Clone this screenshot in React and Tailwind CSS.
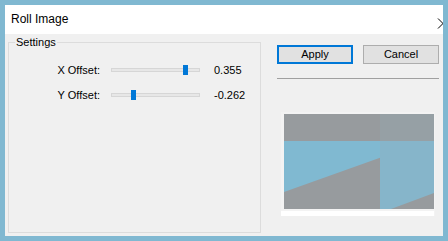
import React from "react";

function Slider({ pos }) {
  return (
    <div className="relative ml-[11px] h-[4px] w-[89px] border border-[#d6d6d6] bg-[#e7e7e7]">
      <div
        className="absolute top-[-4px] h-[10px] w-[5px] bg-[#0078d7]"
        style={{ left: pos - 1 }}
      />
    </div>
  );
}

function Row({ label, pos, value }) {
  return (
    <div className="flex h-[20px] items-center">
      <div className="w-[91px] text-right">{label}</div>
      <Slider pos={pos} />
      <div className="ml-[14px]">{value}</div>
    </div>
  );
}

export default function App() {
  return (
    <div className="h-[241px] w-[448px] bg-[#80b8d1] p-[5px] font-['Liberation_Sans',Arial,sans-serif] text-[11px] text-black">
      <div className="relative flex h-[231px] w-[438px] flex-col overflow-hidden bg-[#f0f0f0]">
        <div className="relative flex h-[29px] shrink-0 items-center bg-white pb-[2px] pl-[6px] text-[12px]">
          Roll Image
          <svg
            className="absolute left-[432px] top-[13px]"
            width="12"
            height="11"
            viewBox="0 0 12 11"
          >
            <path d="M1 0.5 L6 5.5 L1 10.5 M11 0.5 L6 5.5 L11 10.5" stroke="#000" strokeWidth="1" fill="none" />
          </svg>
        </div>
        <div className="flex flex-1 pb-[3px] pl-[3px] pt-[8px]">
          <div className="relative w-[253px] border border-[#dcdcdc] pt-[17px]">
            <div className="absolute left-[6px] top-[-7px] bg-[#f0f0f0] px-[1px] leading-[13px]">
              Settings
            </div>
            <div className="flex flex-col gap-[5px]">
              <Row label="X Offset:" pos={72} value="0.355" />
              <Row label="Y Offset:" pos={20} value="-0.262" />
            </div>
          </div>
          <div className="flex flex-1 flex-col pl-[16px] pr-[4px] pt-[3px]">
            <div className="flex gap-[10px]">
              <div className="flex h-[19px] w-[76px] items-center justify-center border-2 border-[#0078d7] bg-[#e1e1e1]">
                Apply
              </div>
              <div className="flex h-[19px] w-[76px] items-center justify-center border border-[#adadad] bg-[#e1e1e1]">
                Cancel
              </div>
            </div>
            <div className="mt-[14px] h-px w-[162px] bg-[#a0a0a0]" />
            <div className="ml-[4px] mt-[33px] w-[154px] bg-[#f3f3f3] pt-[2px]">
              <svg className="ml-[3px] block" width="150" height="95" viewBox="0 0 150 95">
                <rect x="0" y="0" width="96" height="27" fill="#979b9e" />
                <rect x="96" y="0" width="54" height="27" fill="#96a0a5" />
                <rect x="0" y="27" width="96" height="68" fill="#80b9d1" />
                <rect x="96" y="27" width="54" height="68" fill="#86b5ca" />
                <polygon points="0,78 96,43.7 96,95 0,95" fill="#979b9e" />
                <polygon points="107,95 150,79 150,95" fill="#979b9e" />
              </svg>
              <div className="mt-[2px] h-[5px] w-[153px] bg-white" />
            </div>
          </div>
        </div>
      </div>
    </div>
  );
}
